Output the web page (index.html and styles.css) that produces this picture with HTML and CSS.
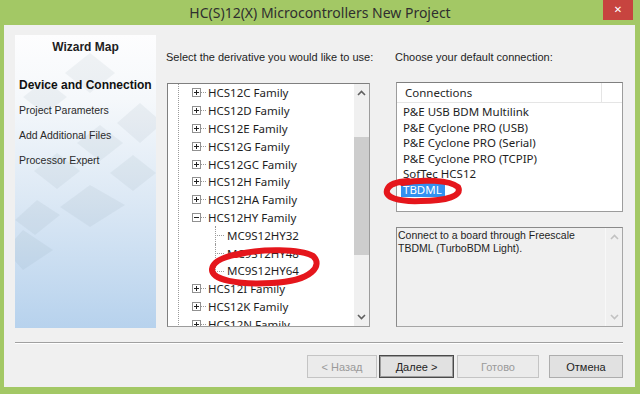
FILE: index.html
```html
<!DOCTYPE html>
<html lang="en">
<head>
  <meta charset="UTF-8" />
  <title>HC(S)12(X) Microcontrollers New Project</title>
  <link rel="stylesheet" href="styles.css">
</head>
<body>
  <div class="window">
    <div class="titlebar">
      <span></span>
      <span class="title">HC(S)12(X) Microcontrollers New Project</span>
      <span class="close">&#x2715;</span>
    </div>

    <div class="client">
      <div class="main">
        <div class="sidebar">
          <svg class="pattern" width="141" height="293" viewBox="0 0 141 293">
            <g fill="#5a6f86" fill-opacity="0.07">
              <path d="M75 18 L100 38 L75 58 L50 38 Z" />
              <path d="M30 45 L52 62 L30 79 L8 62 Z" />
              <path d="M125 68 L148 88 L125 108 L102 88 Z" />
              <path d="M85 90 L108 108 L85 126 L62 108 Z" />
              <path d="M42 118 L65 136 L42 154 L19 136 Z" />
              <path d="M118 120 L141 138 L118 156 L95 138 Z" />
              <path d="M75 150 L110 170 L75 192 L45 172 Z" />
              <path d="M22 165 L45 180 L20 200 L0 185 Z" />
              <path d="M8 195 L38 215 L8 235 L-10 215 Z" />
            </g>
          </svg>
          <div class="map-title">Wizard Map</div>
          <div class="step current">Device and Connection</div>
          <div class="step">Project Parameters</div>
          <div class="step">Add Additional Files</div>
          <div class="step">Processor Expert</div>
        </div>

        <div class="col mid">
          <div class="label">Select the derivative you would like to use:</div>
          <div class="tree">
            <div class="tree-body">
              <div class="node"><i class="exp"></i><i class="dots"></i><span>HCS12C Family</span></div>
              <div class="node"><i class="exp"></i><i class="dots"></i><span>HCS12D Family</span></div>
              <div class="node"><i class="exp"></i><i class="dots"></i><span>HCS12E Family</span></div>
              <div class="node"><i class="exp"></i><i class="dots"></i><span>HCS12G Family</span></div>
              <div class="node"><i class="exp"></i><i class="dots"></i><span>HCS12GC Family</span></div>
              <div class="node"><i class="exp"></i><i class="dots"></i><span>HCS12H Family</span></div>
              <div class="node"><i class="exp"></i><i class="dots"></i><span>HCS12HA Family</span></div>
              <div class="node"><i class="exp open"></i><i class="dots"></i><span>HCS12HY Family</span></div>
              <div class="leaf"><i class="branch"></i><span>MC9S12HY32</span></div>
              <div class="leaf"><i class="branch"></i><span>MC9S12HY48</span></div>
              <div class="leaf last"><i class="branch"></i><span>MC9S12HY64</span></div>
              <div class="node"><i class="exp"></i><i class="dots"></i><span>HCS12I Family</span></div>
              <div class="node"><i class="exp"></i><i class="dots"></i><span>HCS12K Family</span></div>
              <div class="node"><i class="exp"></i><i class="dots"></i><span>HCS12N Family</span></div>
            </div>
            <div class="vscroll">
              <svg class="arrow" width="9" height="6" viewBox="0 0 9 6"><polyline points="1,5 4.5,1.5 8,5" /></svg>
              <div class="track"><div class="thumb"></div></div>
              <svg class="arrow" width="9" height="6" viewBox="0 0 9 6"><polyline points="1,1 4.5,4.5 8,1" /></svg>
            </div>
          </div>
        </div>

        <div class="col right">
          <div class="label">Choose your default connection:</div>
          <div class="connlist">
            <div class="conn-head">
              <span class="head-cell">Connections</span>
              <span class="head-rest"></span>
            </div>
            <div class="conn-item">P&amp;E USB BDM Multilink</div>
            <div class="conn-item">P&amp;E Cyclone PRO (USB)</div>
            <div class="conn-item">P&amp;E Cyclone PRO (Serial)</div>
            <div class="conn-item">P&amp;E Cyclone PRO (TCPIP)</div>
            <div class="conn-item">SofTec HCS12</div>
            <div class="conn-item"><span class="selected">TBDML</span></div>
          </div>
          <div class="desc">
            <div class="desc-text">Connect to a board through Freescale<br>TBDML (TurboBDM Light).</div>
            <div class="vscroll off">
              <svg class="arrow" width="9" height="6" viewBox="0 0 9 6"><polyline points="1,5 4.5,1.5 8,5" /></svg>
              <div class="track"></div>
              <svg class="arrow" width="9" height="6" viewBox="0 0 9 6"><polyline points="1,1 4.5,4.5 8,1" /></svg>
            </div>
          </div>
        </div>
      </div>

      <div class="sep"></div>

      <div class="buttons">
        <button class="btn back" disabled>&lt; Назад</button>
        <button class="btn next">Далее &gt;</button>
        <button class="btn finish" disabled>Готово</button>
        <button class="btn cancel">Отмена</button>
      </div>
    </div>

    <!-- red marker circles drawn over the dialog -->
    <svg class="marks" width="640" height="394" viewBox="0 0 640 394">
      <g fill="none" stroke="#e5161c" stroke-width="6" stroke-linecap="round">
        <path d="M236 255 C262 248 300 249 313 256 C323 265 313 281 272 283 C238 285 211 280 212 269 C213 261 224 256 244 253" />
        <path d="M402 183 C422 179 450 180 458 187 C463 196 446 201 421 201 C397 202 385 197 387 190 C389 184 396 182 408 181" />
      </g>
    </svg>
  </div>
</body>
</html>
```

FILE: styles.css
```css
body {
  margin: 0;
  background: #fff;
}
.window {
  position: relative;
  width: 640px;
  height: 394px;
  background: #a3c865;
  display: flex;
  flex-direction: column;
  font-family: "Liberation Sans", Arial, sans-serif;
  color: #1e1e1e;
}
.titlebar {
  height: 25px;
  display: grid;
  grid-template-columns: 1fr auto 1fr;
  align-items: start;
}
.title {
  font-family: "Noto Sans", sans-serif;
  font-size: 14px;
  line-height: 26px;
  color: #2f2f2f;
  white-space: nowrap;
}
.close {
  justify-self: end;
  margin-right: 7px;
  width: 30px;
  height: 20px;
  background: #c7443f;
  color: #fff;
  font-family: "DejaVu Sans", sans-serif;
  font-size: 10px;
  font-weight: bold;
  line-height: 20px;
  text-align: center;
}
.client {
  flex: 1;
  margin: 0 5px 7px 4px;
  background: #f0f0f0;
  padding: 10px 12px 9px 11px;
  display: flex;
  flex-direction: column;
}
.main {
  display: flex;
  align-items: flex-start;
  height: 293px;
}

/* wizard map */
.sidebar {
  position: relative;
  width: 141px;
  height: 293px;
  background: linear-gradient(to bottom, #fdfdfe 0%, #f5f8fb 22%, #dde9f5 55%, #b7d2ed 100%);
}
.pattern {
  position: absolute;
  left: 0;
  top: 0;
}
.map-title {
  position: relative;
  margin-top: 4px;
  font-weight: bold;
  font-size: 12px;
  line-height: 16px;
  text-align: center;
}
.step {
  position: relative;
  padding-left: 4px;
  font-size: 10.5px;
  line-height: 25px;
  color: #2a2a2a;
}
.step.current {
  margin-top: 18px;
  font-weight: bold;
  font-size: 12px;
  color: #111;
}

.col {
  display: flex;
  flex-direction: column;
}
.mid {
  width: 203px;
  margin-left: 11px;
}
.right {
  width: 227px;
  margin-left: 26px;
}
.label {
  margin: 15px 0 0 -1px;
  font-size: 11px;
  line-height: 14px;
  white-space: nowrap;
  color: #1e1e1e;
}

/* derivative tree */
.tree {
  margin-top: 19px;
  height: 244px;
  box-sizing: border-box;
  border: 1px solid #9c9c9c;
  border-top-color: #7f7f7f;
  border-left-color: #7f7f7f;
  background: #fff;
  display: flex;
}
.tree-body {
  flex: 1;
  overflow: hidden;
  font-family: "Noto Sans", sans-serif;
  font-size: 11.5px;
  background: linear-gradient(to bottom, #9a9a9a 1px, transparent 1px) 10px 0 / 1px 2px repeat-y;
}
.node, .leaf {
  height: 17.8px;
  display: flex;
  align-items: center;
  white-space: nowrap;
}
.node {
  padding-left: 24px;
}
.exp {
  width: 9px;
  height: 9px;
  box-sizing: border-box;
  border: 1px solid #919191;
  background:
    linear-gradient(#222, #222) center / 5px 1px no-repeat,
    linear-gradient(#222, #222) center / 1px 5px no-repeat,
    #fff;
}
.exp.open {
  background: linear-gradient(#222, #222) center / 5px 1px no-repeat, #fff;
}
.dots {
  width: 5px;
  height: 1px;
  margin-right: 2px;
  background: linear-gradient(to right, #9a9a9a 1px, transparent 1px) 0 0 / 2px 1px repeat-x;
}
.leaf {
  padding-left: 47px;
}
.branch {
  align-self: stretch;
  width: 9px;
  margin-right: 2px;
  border-left: 1px dotted #9a9a9a;
  background: linear-gradient(to right, #9a9a9a 1px, transparent 1px) 1px 50% / 2px 1px repeat-x;
}
.leaf.last .branch {
  align-self: flex-start;
  height: 10px;
  background-position: 1px 100%;
}

.vscroll {
  width: 15px;
  background: #f0f0f0;
  display: flex;
  flex-direction: column;
  align-items: center;
}
.vscroll .arrow {
  flex: none;
  margin: 6px 0;
}
.vscroll .arrow polyline {
  fill: none;
  stroke: #606060;
  stroke-width: 1.6;
}
.track {
  flex: 1;
  width: 100%;
}
.thumb {
  margin-top: 35px;
  height: 118px;
  background: #cdcdcd;
}

/* connection list */
.connlist {
  margin-top: 18px;
  height: 130px;
  box-sizing: border-box;
  border: 1px solid #9c9c9c;
  border-top-color: #7f7f7f;
  background: #fff;
  font-family: "Noto Sans", sans-serif;
  font-size: 11.5px;
}
.conn-head {
  display: flex;
  height: 20px;
  box-sizing: border-box;
  border-bottom: 1px solid #e5e5e5;
  line-height: 20px;
}
.head-cell {
  width: 205px;
  box-sizing: border-box;
  padding-left: 8px;
  border-right: 1px solid #e5e5e5;
  color: #262626;
}
.head-rest {
  flex: 1;
}
.conn-item {
  padding-left: 6px;
  line-height: 15.6px;
  white-space: nowrap;
}
.conn-item:nth-child(2) {
  margin-top: 1px;
}
.selected {
  display: inline-block;
  margin-left: -2px;
  padding: 0 3px 0 2px;
  line-height: 14px;
  background: #3391f0;
  color: #fff;
}

/* description */
.desc {
  margin-top: 15px;
  height: 100px;
  box-sizing: border-box;
  border: 1px solid #a6a6a6;
  border-top-color: #8a8a8a;
  border-left-color: #8a8a8a;
  display: flex;
}
.desc-text {
  flex: 1;
  padding: 1px 0 0 1px;
  font-size: 10.5px;
  line-height: 13px;
  color: #1e1e1e;
}
.vscroll.off {
  width: 16px;
  border-left: 1px solid #f8f8f8;
}
.vscroll.off .arrow polyline {
  stroke: #c2c2c2;
}

.sep {
  margin-top: 14px;
  height: 1px;
  background: #a0a0a0;
  border-bottom: 1px solid #fff;
}
.buttons {
  margin-top: 11px;
  display: flex;
  justify-content: flex-end;
}
.btn {
  height: 23px;
  margin: 0;
  padding: 0;
  border: 1px solid #adadad;
  background: #e1e1e1;
  font-family: "Liberation Sans", Arial, sans-serif;
  font-size: 11px;
  color: #1e1e1e;
}
.btn:disabled {
  border-color: #c4c4c4;
  background: #ebebeb;
  color: #9a9a9a;
}
.back { width: 70px; }
.next {
  width: 75px;
  margin-left: 2px;
  border-color: #4a4a4a;
  box-shadow: inset 0 0 0 1px #9c9c9c;
}
.finish { width: 82px; margin-left: 3px; }
.cancel { width: 74px; margin-left: 10px; }

.marks {
  position: absolute;
  left: 0;
  top: 0;
  pointer-events: none;
}
```
